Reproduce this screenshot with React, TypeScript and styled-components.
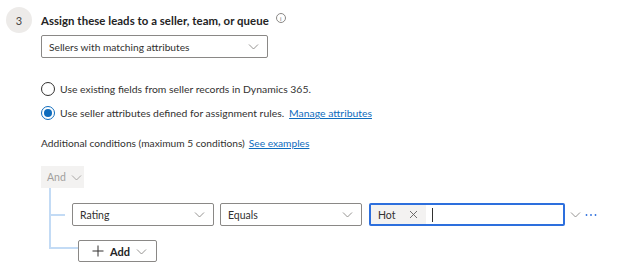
import React from "react";
import styled, { createGlobalStyle } from "styled-components";

const GlobalStyle = createGlobalStyle`
  body {
    margin: 0;
    background: #ffffff;
    font-family: Lato, "Open Sans", sans-serif;
    color: #323130;
  }
`;

const Page = styled.div`
  display: flex;
  align-items: flex-start;
  gap: 9px;
  padding: 7px 0 0 6px;
`;

const StepBadge = styled.div`
  width: 26px;
  height: 26px;
  border-radius: 50%;
  background: #edebe9;
  color: #484644;
  font-size: 11px;
  display: flex;
  align-items: center;
  justify-content: center;
  flex-shrink: 0;
`;

const Content = styled.div`
  display: flex;
  flex-direction: column;
`;

const Title = styled.h2`
  margin: 0;
  height: 26px;
  display: flex;
  align-items: center;
  gap: 7px;
  font-size: 11.4px;
  font-weight: 700;
  letter-spacing: 0.05px;
  color: #242424;
`;

const InfoIcon = styled.span`
  width: 8px;
  height: 8px;
  border: 1px solid #8a8886;
  border-radius: 50%;
  font-size: 6px;
  font-weight: 600;
  color: #8a8886;
  display: inline-flex;
  align-items: center;
  justify-content: center;
  margin-top: -4px;
`;

const Select = styled.div<{ $width: number; $focused?: boolean; $size?: number }>`
  box-sizing: border-box;
  width: ${(p) => p.$width}px;
  height: 23px;
  border: ${(p) => (p.$focused ? "2px solid #2d6fdd" : "1px solid #8a8886")};
  border-radius: 2px;
  display: flex;
  align-items: center;
  padding: 0 ${(p) => (p.$focused ? "0" : "8px")} 0
    ${(p) => (p.$focused ? "0" : "7px")};
  font-size: ${(p) => p.$size ?? 10.5}px;
  background: #fff;
`;

const SelectText = styled.span`
  flex: 1;
`;

const PageSelect = styled(Select)`
  margin-top: 2px;
`;

const RadioGroup = styled.div`
  display: flex;
  flex-direction: column;
  gap: 10px;
  margin-top: 24px;
`;

const RadioRow = styled.label`
  display: flex;
  align-items: center;
  gap: 5px;
  font-size: 10.4px;
  height: 14px;
`;

const RadioCircle = styled.span<{ $checked?: boolean }>`
  box-sizing: border-box;
  width: 14px;
  height: 14px;
  border-radius: 50%;
  border: 1px solid ${(p) => (p.$checked ? "#0f6cbd" : "#323130")};
  display: flex;
  align-items: center;
  justify-content: center;
  &::after {
    content: "";
    width: 8px;
    height: 8px;
    border-radius: 50%;
    background: ${(p) => (p.$checked ? "#0f6cbd" : "transparent")};
  }
`;

const TextLink = styled.a<{ $gap?: number }>`
  color: #0f6cbd;
  text-decoration: underline;
  margin-left: ${(p) => p.$gap ?? 4}px;
  cursor: pointer;
`;

const Hint = styled.div`
  margin-top: 17px;
  font-size: 10.2px;
  color: #323130;
`;

const AndButton = styled.div`
  margin-top: 17px;
  box-sizing: border-box;
  width: 43px;
  height: 22px;
  background: #f3f2f1;
  color: #a19f9d;
  font-size: 10.5px;
  display: flex;
  align-items: center;
  gap: 5px;
  padding-left: 6px;
`;

const TreeBody = styled.div`
  margin-left: 8px;
  border-left: 2px solid #c3dbf5;
  padding: 15px 0 14px;
`;

const ConditionRow = styled.div`
  display: flex;
  align-items: center;
`;

const Stub = styled.span`
  width: 14px;
  height: 2px;
  background: #c3dbf5;
  margin-right: 7px;
`;

const Fields = styled.div`
  display: flex;
  align-items: center;
  gap: 6px;
`;

const ValueField = styled(Select)`
  margin-left: 1px;
`;

const Tag = styled.span`
  height: 19px;
  width: 55px;
  box-sizing: border-box;
  background: #f3f2f1;
  display: flex;
  align-items: center;
  justify-content: space-between;
  padding: 0 8px 0 7px;
  font-size: 10.5px;
`;

const Caret = styled.span`
  width: 1px;
  height: 14px;
  background: #323130;
  margin-left: 6px;
`;

const RowTools = styled.div`
  display: flex;
  align-items: center;
  gap: 4px;
  margin-left: 5px;
`;

const AddRow = styled.div`
  display: flex;
  align-items: flex-start;
  margin-left: 8px;
`;

const Elbow = styled.span`
  width: 27px;
  height: 7px;
  border-left: 2px solid #c3dbf5;
  border-bottom: 2px solid #c3dbf5;
`;

const AddButton = styled.div`
  box-sizing: border-box;
  width: 79px;
  height: 22px;
  border: 1px solid #8a8886;
  border-radius: 2px;
  display: flex;
  align-items: center;
  padding-left: 13px;
  gap: 6px;
  font-size: 11px;
  font-weight: 700;
  color: #242424;
`;

const Chevron = ({ color = "#8a8886", size = 11 }: { color?: string; size?: number }) => (
  <svg width={size} height={size} viewBox="0 0 11 11" fill="none">
    <path d="M1 3.5 5.5 8 10 3.5" stroke={color} strokeWidth="0.9" />
  </svg>
);

const Dismiss = () => (
  <svg width="9" height="9" viewBox="0 0 9 9" fill="none">
    <path d="M1 1 8 8M8 1 1 8" stroke="#605e5c" strokeWidth="0.9" />
  </svg>
);

const Plus = () => (
  <svg width="12" height="12" viewBox="0 0 12 12" fill="none">
    <path d="M6 0.5v11M0.5 6h11" stroke="#323130" strokeWidth="1" />
  </svg>
);

const More = () => (
  <svg width="12" height="4" viewBox="0 0 12 4" fill="#2d6fdd">
    <circle cx="1.5" cy="2" r="0.9" />
    <circle cx="6" cy="2" r="0.9" />
    <circle cx="10.5" cy="2" r="0.9" />
  </svg>
);

const App: React.FC = () => {
  return (
    <>
      <GlobalStyle />
      <Page>
        <StepBadge>3</StepBadge>
        <Content>
          <Title>
            Assign these leads to a seller, team, or queue
            <InfoIcon>i</InfoIcon>
          </Title>
          <PageSelect $width={227} $size={10.2}>
            <SelectText>Sellers with matching attributes</SelectText>
            <Chevron />
          </PageSelect>

          <RadioGroup>
            <RadioRow>
              <RadioCircle />
              Use existing fields from seller records in Dynamics 365.
            </RadioRow>
            <RadioRow>
              <RadioCircle $checked />
              <span>
                Use seller attributes defined for assignment rules.
                <TextLink $gap={5}>Manage attributes</TextLink>
              </span>
            </RadioRow>
          </RadioGroup>

          <Hint>
            Additional conditions (maximum 5 conditions)
            <TextLink>See examples</TextLink>
          </Hint>

          <AndButton>
            And
            <Chevron color="#a19f9d" />
          </AndButton>

          <TreeBody>
            <ConditionRow>
              <Stub />
              <Fields>
                <Select $width={142}>
                  <SelectText>Rating</SelectText>
                  <Chevron />
                </Select>
                <Select $width={142}>
                  <SelectText>Equals</SelectText>
                  <Chevron />
                </Select>
                <ValueField $width={196} $focused>
                  <Tag>
                    Hot
                    <Dismiss />
                  </Tag>
                  <Caret />
                </ValueField>
              </Fields>
              <RowTools>
                <Chevron />
                <More />
              </RowTools>
            </ConditionRow>
          </TreeBody>

          <AddRow>
            <Elbow />
            <AddButton>
              <Plus />
              Add
              <Chevron />
            </AddButton>
          </AddRow>
        </Content>
      </Page>
    </>
  );
};

export default App;
